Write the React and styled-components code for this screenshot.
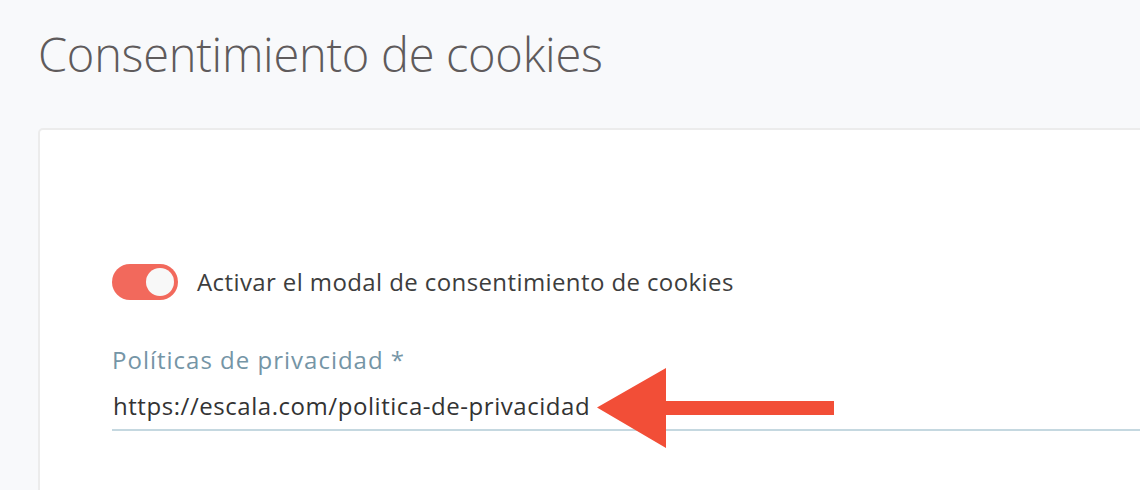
import React from "react";
import styled, { createGlobalStyle } from "styled-components";

const GlobalStyle = createGlobalStyle`
  html, body {
    margin: 0;
    padding: 0;
    background: #f8f9fb;
    font-family: "Open Sans", "Noto Sans", sans-serif;
    overflow: hidden;
  }
`;

const Page = styled.div`
  width: 1140px;
  height: 490px;
  padding: 22px 0 0 38px;
  box-sizing: border-box;
  overflow: hidden;
`;

const Title = styled.h1`
  margin: 0 0 42px;
  font-size: 47px;
  font-weight: 300;
  line-height: 64px;
  letter-spacing: -0.3px;
  color: #5f5b5c;
`;

const Card = styled.section`
  width: 1200px;
  height: 400px;
  background: #ffffff;
  border: 2px solid #ececec;
  border-radius: 5px;
  box-sizing: border-box;
  padding: 134px 0 0 72px;
`;

const ToggleRow = styled.label`
  display: flex;
  align-items: center;
  gap: 19px;
  font-size: 24px;
  line-height: 34px;
  letter-spacing: 0.4px;
  color: #3d3d3d;
`;

const Switch = styled.span`
  width: 66px;
  height: 36px;
  border-radius: 18px;
  background: ${(p) => (p.on ? "#f2695c" : "#cfd6da")};
  display: flex;
  align-items: center;
  justify-content: ${(p) => (p.on ? "flex-end" : "flex-start")};
  padding: 0 4px;
  box-sizing: border-box;
`;

const Knob = styled.span`
  width: 28px;
  height: 28px;
  border-radius: 50%;
  background: #f8f8f8;
`;

const Field = styled.div`
  position: relative;
  margin-top: 45px;
`;

const FieldLabel = styled.div`
  font-size: 24px;
  color: #7595a6;
  line-height: 30px;
  letter-spacing: 1px;
`;

const Input = styled.div`
  font-size: 24px;
  color: #333333;
  line-height: 30px;
  letter-spacing: 0.55px;
  padding: 16px 0 8px 1px;
  border-bottom: 2px solid #c5d8e0;
`;

const Arrow = styled.svg`
  position: absolute;
  left: 485px;
  top: 22px;
`;

export default function App() {
  return (
    <>
      <GlobalStyle />
      <Page>
        <Title>Consentimiento de cookies</Title>
        <Card>
          <ToggleRow>
            <Switch on>
              <Knob />
            </Switch>
            Activar el modal de consentimiento de cookies
          </ToggleRow>
          <Field>
            <FieldLabel>Políticas de privacidad *</FieldLabel>
            <Input>https://escala.com/politica-de-privacidad</Input>
            <Arrow width="238" height="82" viewBox="0 0 238 82">
              <polygon points="0,40.5 69,1 69,34 237,34 237,48 69,48 69,81" fill="#f24e37" />
            </Arrow>
          </Field>
        </Card>
      </Page>
    </>
  );
}
